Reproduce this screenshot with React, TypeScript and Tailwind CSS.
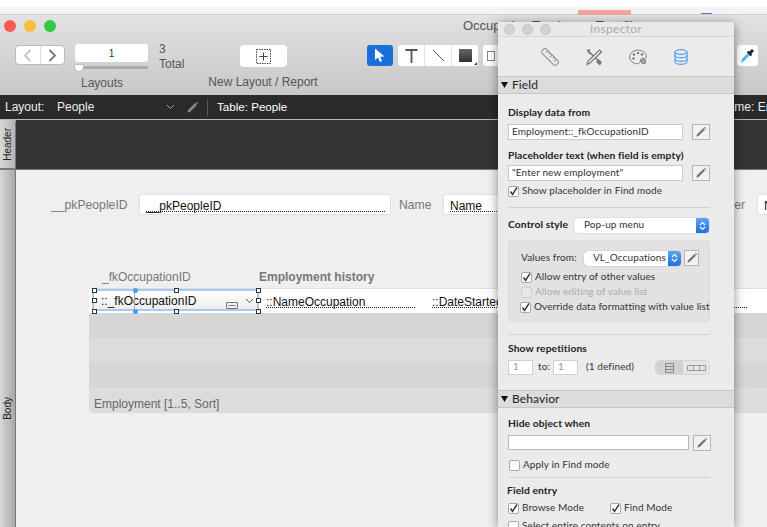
import React from "react";

const Pencil = ({ size = 14, color = "#777" }: { size?: number; color?: string }) => (
  <svg width={size} height={size} viewBox="0 0 14 14">
    <path d="M1.5 12.5 L2.5 9.5 L9.8 2.2 L11.8 4.2 L4.5 11.5 Z" fill={color} />
    <path d="M10.5 1.5 L11.3 0.8 L13.2 2.7 L12.5 3.5 Z" fill={color} />
  </svg>
);

const PencilBtn = ({ className = "" }: { className?: string }) => (
  <div className={`w-[18px] h-[16px] shrink-0 bg-[#f2f2f2] border border-[#b5b5b5] flex items-center justify-center ${className}`}>
    <Pencil size={12} />
  </div>
);

const Check = ({ checked, disabled = false, label, className = "" }: { checked?: boolean; disabled?: boolean; label: string; className?: string }) => (
  <div className={`flex items-center h-[14px] gap-[3px] whitespace-nowrap ${className}`}>
    <div className={`w-[9px] h-[9px] box-content shrink-0 rounded-[2px] border flex items-center justify-center ${disabled ? "border-[#cfcfcf] bg-[#e6e6e6]" : "border-[#a8a8a8] bg-white"}`}>
      {checked && (
        <svg width="9" height="9" viewBox="0 0 9 9">
          <path d="M1.5 4.5 L3.5 7.5 L8 0.5" fill="none" stroke="#333" strokeWidth="1.4" />
        </svg>
      )}
    </div>
    <span className={`pb-[2px] ${disabled ? "text-[#ababab]" : "text-[#333]"}`}>{label}</span>
  </div>
);

const Stepper = () => (
  <div className="w-[13px] h-full shrink-0 bg-gradient-to-b from-[#5da3f5] to-[#1c6fe0] rounded-r-[4px] flex items-center justify-center">
    <svg width="7" height="10" viewBox="0 0 7 10">
      <path d="M1 4 L3.5 1.5 L6 4 M1 6 L3.5 8.5 L6 6" fill="none" stroke="white" strokeWidth="1.1" />
    </svg>
  </div>
);

const SectionHead = ({ title }: { title: string }) => (
  <div className="h-[18px] bg-[#dcdcdc] border-y border-[#c6c6c6] flex items-center pl-[3px] gap-[4px] text-[12px] text-[#222] shrink-0">
    <svg width="7" height="6" viewBox="0 0 7 6"><path d="M0 0 H7 L3.5 6 Z" fill="#111" /></svg>
    <span>{title}</span>
  </div>
);

const Handle = ({ x, y, blue }: { x: number; y: number; blue?: boolean }) => (
  <div
    className={`absolute w-[5px] h-[5px] ${blue ? "bg-[#4a9cf5] rounded-full" : "bg-white border border-[#333]"}`}
    style={{ left: x, top: y }}
  />
);

const Inspector = () => (
  <div
    className="absolute left-[498px] top-[22px] w-[236px] h-[505px] bg-[#ebebeb] shadow-[0_2px_10px_rgba(0,0,0,0.45)] flex flex-col overflow-hidden text-[10px] text-[#333] tracking-[0.1px]"
    style={{ fontFamily: 'Lato, sans-serif' }}
  >
    <div className="h-[15px] relative flex items-center justify-center bg-[#e9e9e9] shrink-0 border-b border-[#d6d6d6]">
      <div className="absolute left-[6px] top-[2px] flex gap-[7px]">
        <div className="w-[11px] h-[11px] rounded-full bg-[#d2d2d2] border border-[#c4c4c4]" />
        <div className="w-[11px] h-[11px] rounded-full bg-[#d2d2d2] border border-[#c4c4c4]" />
        <div className="w-[11px] h-[11px] rounded-full bg-[#d2d2d2] border border-[#c4c4c4]" />
      </div>
      <span className="text-[12px] text-[#a9a9a9] tracking-[0.3px]">Inspector</span>
    </div>
    <div className="h-[39px] flex items-center pl-[43px] gap-[26px] shrink-0">
      <svg width="18" height="18" viewBox="0 0 18 18">
        <g transform="rotate(45 9 9)">
          <rect x="-1" y="6" width="20" height="6" fill="none" stroke="#8a8a8a" />
          <path d="M3 6v3M6 6v2M9 6v3M12 6v2M15 6v3" stroke="#8a8a8a" />
        </g>
      </svg>
      <svg width="18" height="18" viewBox="0 0 18 18">
        <path d="M3 3 L15 14" stroke="#777" strokeWidth="1.6" />
        <path d="M1.5 1.5 L5.5 1.5 L4.5 3.5 L6 5 L4 6 Z" fill="#777" />
        <path d="M13 11 L17 14 L15 17.5 L11 14 Z" fill="#777" />
        <path d="M14.5 2 L16.5 4 L5 15 L2 16.5 L3 13 Z" fill="#ececec" stroke="#777" strokeWidth="1.2" />
      </svg>
      <svg width="18" height="16" viewBox="0 0 18 16">
        <path d="M9 1.2 C14 1.2 17.3 4 17.3 8 C17.3 9.5 16 9.8 14.5 9.3 C12.8 8.8 11.5 9.6 11.5 11 C11.5 13 10.5 14.8 8.5 14.8 C4 14.8 .7 11.8 .7 8 C.7 4 4 1.2 9 1.2 Z" fill="#ededed" stroke="#808080" />
        <circle cx="5" cy="5.5" r="1.2" fill="#777" />
        <circle cx="9" cy="4" r="1.2" fill="#777" />
        <circle cx="13" cy="5.5" r="1.2" fill="#777" />
        <circle cx="4.5" cy="9.5" r="1.2" fill="#777" />
        <circle cx="14.5" cy="12.5" r="2.2" fill="#aaa" stroke="#777" />
      </svg>
      <svg width="14" height="16" viewBox="0 0 14 16" className="ml-[1px]">
        <ellipse cx="7" cy="3" rx="6" ry="2.3" fill="none" stroke="#2f8ff0" />
        <path d="M1 3 V13 C1 14.3 3.5 15.3 7 15.3 C10.5 15.3 13 14.3 13 13 V3" fill="none" stroke="#2f8ff0" />
        <path d="M1 6.5 C1 7.8 3.5 8.8 7 8.8 C10.5 8.8 13 7.8 13 6.5 M1 10 C1 11.3 3.5 12.3 7 12.3 C10.5 12.3 13 11.3 13 10" fill="none" stroke="#2f8ff0" />
      </svg>
    </div>
    <SectionHead title="Field" />
    <div className="pl-[10px] pr-[24px] flex flex-col shrink-0">
      <div className="h-[14px] mt-[13px] pb-[2px] font-bold text-[10.3px] flex items-center text-[#222]">Display data from</div>
      <div className="flex mt-[3px] gap-[9px]">
        <div className="w-[175px] h-[16px] bg-white border border-[#c9c9c9] pl-[3px] pb-[2px] flex items-center">Employment::_fkOccupationID</div>
        <PencilBtn />
      </div>
      <div className="h-[14px] mt-[10px] pb-[2px] font-bold text-[10.3px] flex items-center text-[#222] whitespace-nowrap">Placeholder text (when field is empty)</div>
      <div className="flex mt-[1px] gap-[9px]">
        <div className="w-[175px] h-[16px] bg-white border border-[#c9c9c9] pl-[3px] pb-[2px] flex items-center">"Enter new employment"</div>
        <PencilBtn />
      </div>
      <Check checked label="Show placeholder in Find mode" className="mt-[3px]" />
      <div className="h-px bg-[#d2d2d2] mt-[9px]" />
      <div className="flex items-center h-[15px] mt-[10px] gap-[7px]">
        <span className="font-bold text-[10.3px] text-[#222] w-[59px] pb-[2px] shrink-0 whitespace-nowrap">Control style</span>
        <div className="w-[135px] h-[15px] shrink-0 bg-white rounded-[4px] shadow-[0_0_1px_rgba(0,0,0,0.5)] flex items-center">
          <span className="flex-1 pl-[10px] pb-[2px]">Pop-up menu</span>
          <Stepper />
        </div>
      </div>
      <div className="h-[82px] mt-[7px] bg-[#e2e2e2] rounded-[4px] border border-[#dcdcdc] pl-[12px] pt-[9px] flex flex-col">
        <div className="flex items-center h-[16px]">
          <span className="w-[63px] shrink-0 pb-[2px] whitespace-nowrap">Values from:</span>
          <div className="w-[97px] h-[15px] shrink-0 bg-white rounded-[4px] shadow-[0_0_1px_rgba(0,0,0,0.5)] flex items-center">
            <span className="flex-1 pl-[9px] pb-[2px]">VL_Occupations</span>
            <Stepper />
          </div>
          <PencilBtn className="ml-[3px] !w-[15px]" />
        </div>
        <Check checked label="Allow entry of other values" className="mt-[4px]" />
        <Check disabled label="Allow editing of value list" className="mt-[1px]" />
        <Check checked label="Override data formatting with value list" className="mt-[1px] -ml-[1px]" />
      </div>
      <div className="h-px bg-[#d2d2d2] mt-[12px]" />
      <div className="h-[14px] mt-[8px] pb-[2px] font-bold text-[10.3px] flex items-center text-[#222]">Show repetitions</div>
      <div className="flex items-center h-[15px] mt-[3px]">
        <div className="w-[25px] h-[15px] shrink-0 bg-white border border-[#d0d0d0] pl-[4px] pb-[2px] text-[#999] flex items-center">1</div>
        <span className="ml-[5px] w-[15px] pb-[2px] shrink-0">to:</span>
        <div className="w-[25px] h-[15px] shrink-0 bg-white border border-[#d0d0d0] pl-[4px] pb-[2px] text-[#999] flex items-center">1</div>
        <span className="ml-[8px] w-[69px] pb-[2px] shrink-0 whitespace-nowrap">(1 defined)</span>
        <div className="w-[55px] h-[15px] shrink-0 rounded-[5px] border border-[#d4d4d4] flex overflow-hidden">
          <div className="w-[27px] bg-[#d2d2d2] flex items-center justify-center">
            <svg width="9" height="10" viewBox="0 0 9 10"><path d="M.5.5h8v9h-8zM.5 3.5h8M.5 6.5h8" fill="none" stroke="#888" /></svg>
          </div>
          <div className="flex-1 bg-[#e6e6e6] flex items-center justify-center">
            <svg width="19" height="6" viewBox="0 0 19 6"><path d="M.5.5h18v5H.5zM6.5.5v5M12.5.5v5" fill="none" stroke="#999" /></svg>
          </div>
        </div>
      </div>
    </div>
    <div className="h-[15px] shrink-0" />
    <SectionHead title="Behavior" />
    <div className="pl-[10px] pr-[23px] flex flex-col shrink-0">
      <div className="h-[14px] mt-[10px] pb-[2px] font-bold text-[10.3px] flex items-center text-[#222]">Hide object when</div>
      <div className="flex mt-[3px] gap-[4px]">
        <div className="w-[181px] h-[15px] shrink-0 bg-white border border-[#b9b9b9]" />
        <PencilBtn />
      </div>
      <Check label="Apply in Find mode" className="mt-[7px] ml-[1px]" />
      <div className="h-px bg-[#d2d2d2] mt-[5px] ml-[1px]" />
      <div className="h-[14px] mt-[7px] pb-[2px] font-bold text-[10.3px] flex items-center text-[#222] -ml-[1px]">Field entry</div>
      <div className="flex mt-[2px]">
        <Check checked label="Browse Mode" className="w-[102px]" />
        <Check checked label="Find Mode" />
      </div>
      <Check label="Select entire contents on entry" className="mt-[4px]" />
    </div>
  </div>
);

const Toolbar = () => (
  <div className="h-[80px] bg-gradient-to-b from-[#e3e2e3] to-[#c9c8c9] relative overflow-hidden shrink-0 text-[12px] text-[#555]">
    <div className="flex items-center h-[22px] pl-[4px] gap-[8px]">
      <div className="w-[12px] h-[12px] shrink-0 rounded-full bg-[#fc5b57]" />
      <div className="w-[12px] h-[12px] shrink-0 rounded-full bg-[#fdbc40]" />
      <div className="w-[12px] h-[12px] shrink-0 rounded-full bg-[#33c748]" />
      <span className="ml-[399px] text-[13px] whitespace-nowrap">Occupation Tracker — Test file</span>
    </div>
    <div className="flex items-start pl-[15px] mt-[8px]">
      <div className="w-[50px] h-[20px] shrink-0 bg-white rounded-[4px] border border-[#bbb] flex">
        <div className="flex-1 flex items-center justify-center border-r border-[#ddd]">
          <svg width="9" height="13" viewBox="0 0 9 13"><path d="M7.5 1 L2 6.5 L7.5 12" fill="none" stroke="#c4c4c4" strokeWidth="1.8" /></svg>
        </div>
        <div className="flex-1 flex items-center justify-center">
          <svg width="9" height="13" viewBox="0 0 9 13"><path d="M1.5 1 L7 6.5 L1.5 12" fill="none" stroke="#777" strokeWidth="1.8" /></svg>
        </div>
      </div>
      <div className="w-[73px] shrink-0 ml-[10px] -mt-[1px] flex flex-col">
        <div className="h-[18px] bg-white rounded-[3px] flex items-center justify-center text-[10px] text-[#333]">1</div>
        <div className="h-[3px] bg-[#aaa] rounded mt-[4px] relative">
          <div className="absolute -left-[1px] -top-[2px] w-[10px] h-[8px] bg-white rounded-b-[5px] border border-[#bbb]" />
        </div>
        <div className="mt-[6px] pl-[6px] whitespace-nowrap leading-[16px]">Layouts</div>
      </div>
      <div className="ml-[11px] w-[30px] shrink-0 -mt-[3px] leading-[14.5px]">
        <div>3</div>
        <div>Total</div>
      </div>
      <div className="ml-[19px] w-[110px] shrink-0 flex flex-col items-center">
        <div className="w-[47px] h-[22px] bg-white rounded-[4px] flex items-center justify-center">
          <svg width="15" height="15" viewBox="0 0 15 15">
            <rect x="0.5" y="0.5" width="14" height="14" fill="none" stroke="#444" strokeDasharray="1.5 1" />
            <path d="M7.5 3.5v8M3.5 7.5h8" stroke="#444" />
          </svg>
        </div>
        <div className="mt-[7px] whitespace-nowrap leading-[16px]">New Layout / Report</div>
      </div>
      <div className="ml-[49px] w-[26px] h-[21px] shrink-0 bg-[#1a6fd8] rounded-[3px] flex items-center justify-center">
        <svg width="12" height="15" viewBox="0 0 12 15"><path d="M1 0.5 L1 12 L4 9.5 L6 14 L8 13 L6.2 8.8 L10.5 8.5 Z" fill="white" /></svg>
      </div>
      <div className="ml-[5px] w-[80px] h-[21px] shrink-0 bg-white rounded-[3px] flex">
        <div className="w-[27px] flex items-center justify-center border-r border-[#e2e2e2]">
          <svg width="13" height="14" viewBox="0 0 13 14"><path d="M0.5 1h12M6.5 1v13" stroke="#555" strokeWidth="1.8" fill="none" /></svg>
        </div>
        <div className="w-[27px] flex items-center justify-center border-r border-[#e2e2e2]">
          <svg width="13" height="13" viewBox="0 0 13 13"><path d="M1 1 L12 12" stroke="#555" /></svg>
        </div>
        <div className="flex-1 flex items-center justify-center relative">
          <div className="w-[13px] h-[13px] bg-gradient-to-b from-[#666] to-[#333]" />
          <svg className="absolute right-[1px] bottom-[1px]" width="3" height="3" viewBox="0 0 3 3"><path d="M3 0V3H0Z" fill="#444" /></svg>
        </div>
      </div>
      <div className="ml-[5px] w-[40px] h-[21px] shrink-0 bg-white rounded-[3px] flex items-center pl-[4px]">
        <div className="w-[8px] h-[10px] border border-[#888]" />
      </div>
      <div className="ml-[214px] w-[21px] h-[21px] shrink-0 bg-white rounded-[3px] flex items-center justify-center">
        <svg width="15" height="16" viewBox="0 0 15 16">
          <path d="M1 15 L2 11 L8 5 L10 7 L4 13 Z" fill="#49b6e8" />
          <path d="M7.5 3.5 L11.5 7.5" stroke="#222" strokeWidth="2" />
          <path d="M9.5 5.5 L13 2" stroke="#222" strokeWidth="3" />
        </svg>
      </div>
    </div>
  </div>
);

export default function App() {
  return (
    <div className="w-[767px] h-[527px] overflow-hidden relative bg-[#efefef] flex flex-col" style={{ fontFamily: '"Liberation Sans", sans-serif' }}>
      <div className="h-[15px] shrink-0 bg-[#f3f3f3] border-b border-[#cfcfcf] flex flex-col relative">
        <div className="h-[7px] bg-white shrink-0" />
        <div className="flex items-start">
          <div className="ml-[578px] w-[53px] h-[5px] mt-[3px] bg-[#f4a3a0]" />
          <div className="ml-[70px] w-[11px] h-px mt-[6px] bg-[#4a7fc4]" />
        </div>
      </div>
      <Toolbar />
      <div className="h-[25px] shrink-0 bg-[#2a2a2a] border-b border-[#bbb] flex items-center text-[12px] text-[#eee] pl-[5px] overflow-hidden">
        <span className="w-[52px] shrink-0 font-medium">Layout:</span>
        <span className="w-[109px] shrink-0">People</span>
        <svg className="shrink-0" width="9" height="6" viewBox="0 0 9 6"><path d="M1 1 L4.5 4.5 L8 1" fill="none" stroke="#aaa" /></svg>
        <div className="ml-[11px] shrink-0"><Pencil size={13} color="#8a8a8a" /></div>
        <div className="ml-[8px] w-px h-[17px] shrink-0 bg-[#555]" />
        <span className="ml-[9px] w-[70px] shrink-0 text-[11.6px] font-medium whitespace-nowrap text-white">Table: People</span>
        <span className="ml-[400px] shrink-0 whitespace-nowrap font-medium">Table Name: Employment</span>
      </div>
      <div className="flex-1 flex min-h-0">
        <div className="w-[16px] shrink-0 flex flex-col">
          <div className="h-[50px] bg-gradient-to-r from-[#d8d8d8] to-[#b4b4b4] border-b-2 border-r border-[#777] flex items-center justify-center rounded-tr-[2px]">
            <span className="text-[10px] text-[#222] [writing-mode:vertical-rl] rotate-180">Header</span>
          </div>
          <div className="flex-1 bg-gradient-to-r from-[#d8d8d8] to-[#a8a8a8] border-r border-[#777] flex items-center justify-center">
            <span className="text-[10px] text-[#222] [writing-mode:vertical-rl] rotate-180 mt-[120px]">Body</span>
          </div>
        </div>
        <div className="flex-1 flex flex-col min-w-0">
          <div className="h-[50px] bg-[#333] border-b border-[#777] shrink-0" />
          <div className="flex-1 bg-[#efefef] text-[12px] overflow-hidden">
            <div className="flex items-center h-[21px] mt-[24px] ml-[35px] whitespace-nowrap">
              <span className="w-[88px] pt-[2px] shrink-0 text-[#777] text-[12.2px]">__pkPeopleID</span>
              <div className="w-[252px] h-[21px] shrink-0 bg-white rounded-[2px] border border-[#e0e0e0] pl-[6px] pr-[5px] pt-[3px] flex items-center">
                <span className="flex-1 border-b border-dotted border-[#222] text-[#111] text-[12px] leading-[10px]">__pkPeopleID</span>
              </div>
              <span className="ml-[8px] w-[44px] pt-[2px] shrink-0 text-[#777] text-[12.2px]">Name</span>
              <div className="w-[200px] h-[21px] shrink-0 bg-white rounded-[2px] border border-[#e0e0e0] pl-[6px] pr-[5px] pt-[3px] flex items-center">
                <span className="flex-1 border-b border-dotted border-[#222] text-[#111] text-[12px] leading-[10px]">Name</span>
              </div>
              <span className="ml-[80px] w-[34px] pt-[2px] pr-[12px] text-[#777] text-[12.2px] text-right overflow-hidden shrink-0">er</span>
              <div className="w-[30px] h-[21px] bg-white rounded-[2px] border border-[#e0e0e0] pl-[6px] pt-[2px] flex items-center shrink-0 text-[12px] text-[#111]">N</div>
            </div>
            <div className="ml-[73px] mt-[53px]">
              <div className="h-[18px] flex items-center whitespace-nowrap pl-[13px]">
                <span className="w-[157px] shrink-0 text-[#777] text-[12px]">_fkOccupationID</span>
                <span className="font-bold text-[#777]">Employment history</span>
              </div>
              <div className="h-[125px] w-[700px] mt-[2px] rounded-b-[4px] overflow-hidden flex flex-col">
                <div className="h-[25px] shrink-0 bg-white border-t border-[#ddd] flex items-center whitespace-nowrap pt-[3px]">
                  <div className="w-[177px] h-[10px] shrink-0" />
                  <span className="w-[149px] shrink-0 border-b border-dotted border-[#222] text-[12px] leading-[10px] text-[#111]">::NameOccupation</span>
                  <span className="ml-[17px] w-[315px] shrink-0 border-b border-dotted border-[#222] text-[12px] leading-[10px] text-[#111]">::DateStarted</span>
                </div>
                <div className="h-[25px] shrink-0 bg-[#d6d6d6]" />
                <div className="h-[25px] shrink-0 bg-[#dcdcdc]" />
                <div className="h-[25px] shrink-0 bg-[#d6d6d6]" />
                <div className="h-[25px] shrink-0 bg-[#dcdcdc] flex items-center pl-[5px] pt-[6px] text-[12px] text-[#666]">Employment [1..5, Sort]</div>
              </div>
            </div>
          </div>
        </div>
      </div>
      {/* selected field overlay */}
      <div className="absolute left-[92px] top-[289px] w-[167px] h-[22px] border-2 border-[#a8c9f0] bg-gradient-to-b from-white to-[#eeeeee] flex items-center pl-[7px] pt-[2px] text-[12px] text-[#111] whitespace-nowrap">
        ::_fkOccupationID
        <svg className="absolute left-[132px] top-[11px]" width="12" height="7" viewBox="0 0 12 7"><path d="M.5.5h11v6H.5zM2.5 3.5h7" fill="none" stroke="#777" /></svg>
        <svg className="absolute left-[151px] top-[7px]" width="9" height="6" viewBox="0 0 9 6"><path d="M1 1 L4.5 4.5 L8 1" fill="none" stroke="#555" /></svg>
        <div className="absolute left-[40px] top-0 bottom-0 w-px bg-[#9ab]" />
      </div>
      <Handle x={92} y={288} />
      <Handle x={174} y={288} />
      <Handle x={256} y={288} />
      <Handle x={92} y={298} />
      <Handle x={256} y={298} />
      <Handle x={92} y={309} />
      <Handle x={174} y={309} />
      <Handle x={256} y={309} />
      <Handle x={133} y={288} blue />
      <Handle x={133} y={309} blue />
      <Inspector />
    </div>
  );
}
